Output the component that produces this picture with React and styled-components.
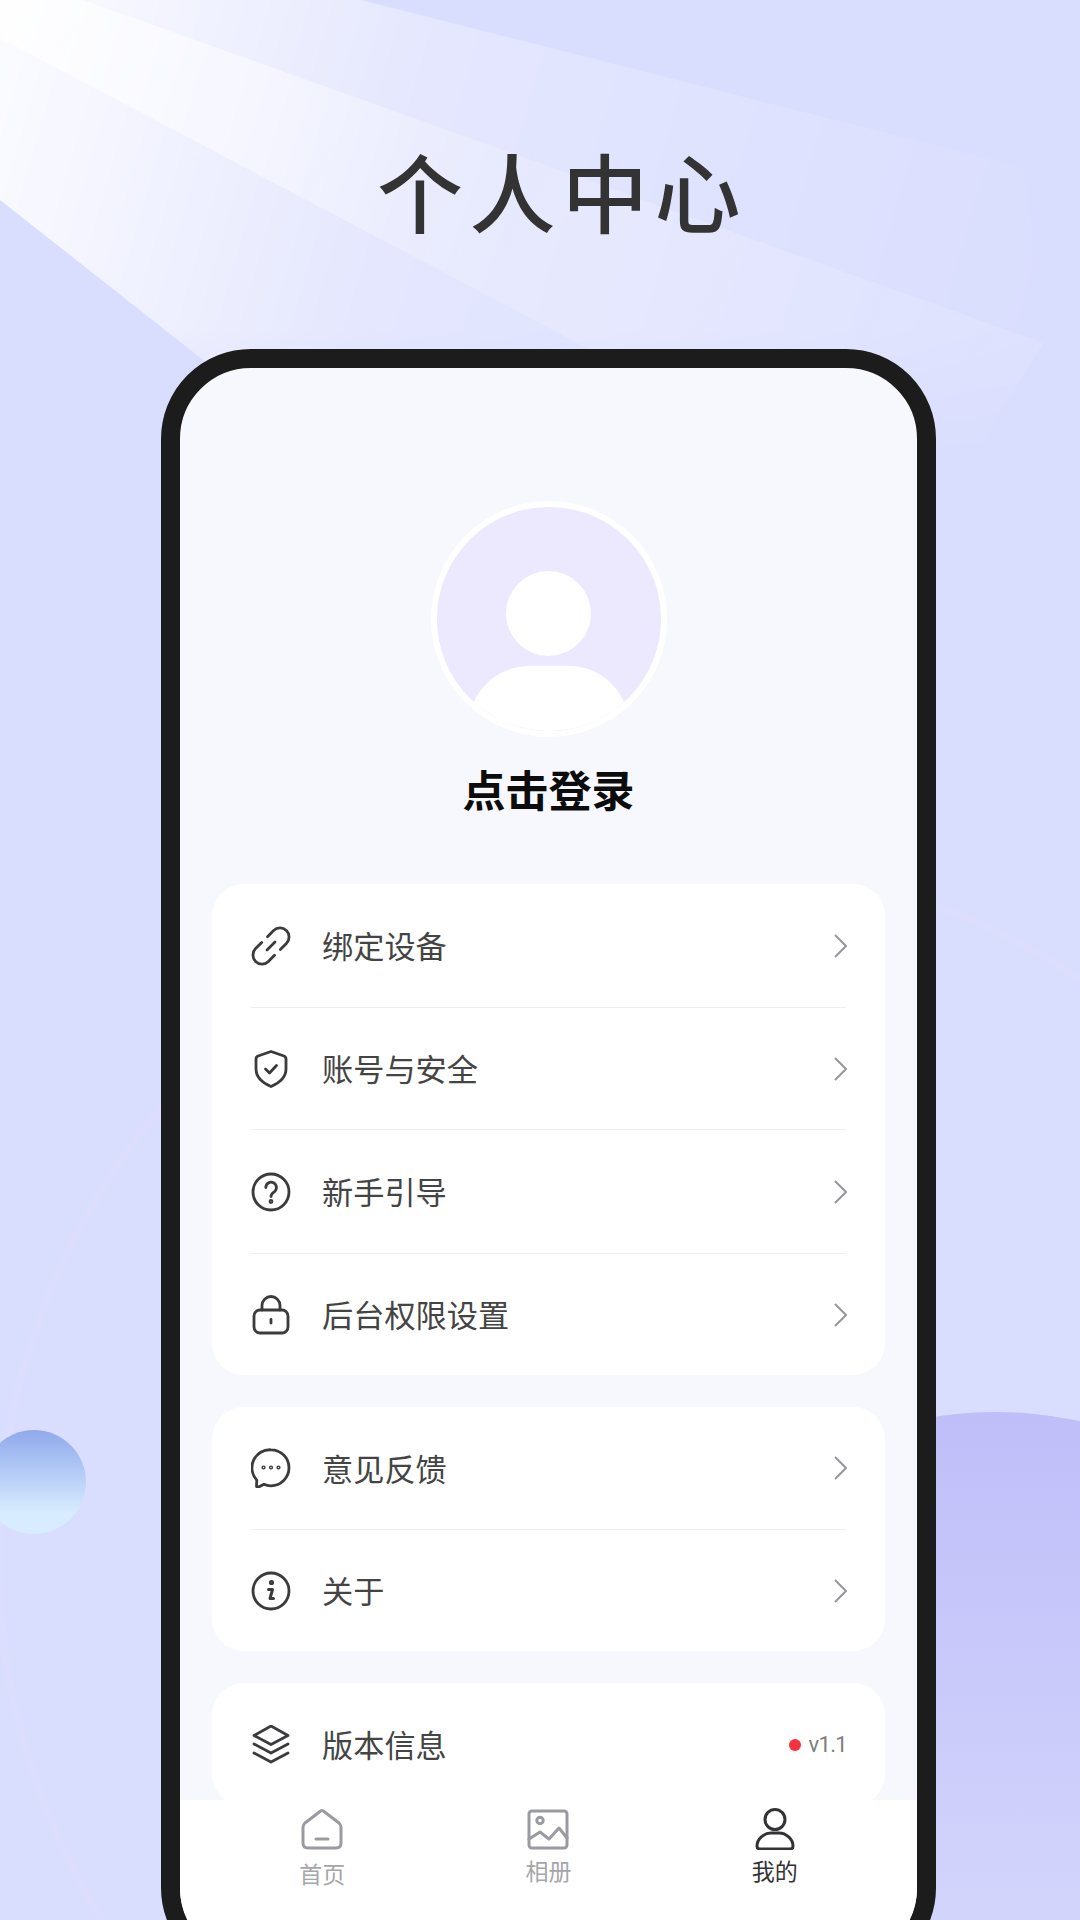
import styled, { createGlobalStyle } from "styled-components";

const GlobalStyle = createGlobalStyle`
  html, body {
    margin: 0;
    padding: 0;
  }
  body {
    font-family: "Noto Sans CJK SC", "Noto Sans", sans-serif;
  }
`;

const Page = styled.div`
  position: relative;
  width: 1080px;
  height: 1920px;
  overflow: hidden;
  background: #dadefe;
`;

const Backdrop = styled.svg`
  position: absolute;
  top: 0;
  left: 0;
`;

const Main = styled.div`
  position: relative;
  display: flex;
  flex-direction: column;
  padding: 140px 0 0 161px;
`;

const Title = styled.h1`
  margin: 0 0 109px 216px;
  font-size: 86px;
  line-height: 100px;
  font-weight: 500;
  letter-spacing: 6.5px;
  color: #333;
  white-space: nowrap;
`;

const Phone = styled.div`
  position: relative;
  box-sizing: border-box;
  width: 775px;
  height: 1629px;
  border: 19px solid #1c1c1c;
  border-radius: 90px;
  background: #f7f8fd;
  overflow: hidden;
`;

const Screen = styled.div`
  display: flex;
  flex-direction: column;
  align-items: center;
  padding-top: 133px;
`;

const Avatar = styled.div`
  position: relative;
  box-sizing: border-box;
  width: 236px;
  height: 236px;
  border: 6px solid #fff;
  border-radius: 50%;
  background: #ece8fd;
  overflow: hidden;
`;

const AvatarHead = styled.div`
  position: absolute;
  top: 64px;
  left: 69px;
  width: 85px;
  height: 85px;
  border-radius: 50%;
  background: #fff;
`;

const AvatarBody = styled.div`
  position: absolute;
  top: 159px;
  left: 32px;
  width: 160px;
  height: 90px;
  border-radius: 60px 60px 0 0;
  background: #fff;
`;

const LoginName = styled.div`
  margin: 21px 0 66px;
  font-size: 43px;
  line-height: 60px;
  font-weight: 700;
  color: #0c0c0c;
`;

const Cards = styled.div`
  display: flex;
  flex-direction: column;
  gap: 32px;
  width: 673px;
`;

const Card = styled.div`
  display: grid;
  grid-template-rows: ${(p) => p.$rows};
  border-radius: 32px;
  background: #fff;
`;

const Row = styled.div`
  display: flex;
  align-items: center;
  margin: 0 39px;
  border-bottom: 1px solid #eeeef0;
  &:last-child {
    border-bottom: 0;
  }
`;

const RowIcon = styled.svg`
  flex: none;
  width: 40px;
  height: 40px;
  fill: none;
  stroke: #3b3b3d;
  stroke-width: 2.8;
  stroke-linecap: round;
  stroke-linejoin: round;
`;

const RowLabel = styled.span`
  flex: 1;
  margin-left: 31px;
  padding-bottom: 1px;
  font-size: 31.2px;
  line-height: 44px;
  color: #444;
`;

const Chevron = styled.svg`
  flex: none;
  width: 13px;
  height: 24px;
  margin-right: -1px;
  fill: none;
  stroke: #97979b;
  stroke-width: 2;
`;

const VersionDot = styled.span`
  width: 12px;
  height: 12px;
  margin-right: 8px;
  border-radius: 50%;
  background: #f5333f;
`;

const VersionText = styled.span`
  margin-right: -1px;
  font-family: Roboto, "Noto Sans", sans-serif;
  font-size: 22px;
  letter-spacing: -0.7px;
  color: #7d7d7d;
`;

const TabBar = styled.div`
  position: absolute;
  left: 0;
  right: 0;
  bottom: 0;
  top: 1432px;
  display: grid;
  grid-template-columns: repeat(3, 1fr);
  padding: 8px 29px 0;
  background: #fff;
`;

const Tab = styled.div`
  display: flex;
  flex-direction: column;
  align-items: center;
`;

const TabIcon = styled.svg`
  display: block;
  width: 42px;
  height: 42px;
  fill: none;
  stroke: ${(p) => (p.$active ? "#333336" : "#9a9aa3")};
  stroke-width: 3;
  stroke-linecap: round;
  stroke-linejoin: round;
`;

const TabLabel = styled.span`
  margin-top: ${(p) => p.$offset}px;
  font-size: 23px;
  line-height: 30px;
  color: ${(p) => (p.$active ? "#333" : "#a6a6aa")};
`;

const Arrow = () => (
  <Chevron viewBox="0 0 13 24">
    <path d="M1 1 L12 12 L1 23" />
  </Chevron>
);

const icons = {
  link: (
    <>
      <path d="M16.5 10.7 L22.6 4.6 A9 9 0 0 1 35.4 17.4 L29.3 23.5" />
      <path d="M23.5 29.3 L17.4 35.4 A9 9 0 0 1 4.6 22.6 L10.7 16.5" />
      <path d="M16 24 L24 16" />
    </>
  ),
  shield: (
    <>
      <path d="M20 2.5 L33 7 Q35 7.8 35 10 V20 C35 28 28 34 20 37.5 C12 34 5 28 5 20 V10 Q5 7.8 7 7 Z" />
      <path d="M14.5 20 L18.5 24 L25.5 16.5" />
    </>
  ),
  help: (
    <>
      <circle cx="20" cy="20" r="18" />
      <path d="M14.8 15.5 a5.3 5.3 0 1 1 8.4 4.3 c-2.2 1.5 -3.2 2.5 -3.2 4.7" />
      <circle cx="20" cy="29.5" r="1" />
    </>
  ),
  lock: (
    <>
      <rect x="3" y="15" width="34" height="23" rx="6" />
      <path d="M11 15 V10.5 a9 9 0 0 1 18 0 V15" />
      <path d="M20 24.5 V28" />
    </>
  ),
  chat: (
    <>
      <path d="M20 1.8 a18 18 0 0 1 0 36 c-2.5 0 -5 -.5 -7 -1.5 l-5.5 2.8 c-1 .5 -2 0 -2 -1 l.3 -6 A18 18 0 0 1 20 1.8 z" />
      <circle cx="12.5" cy="19.5" r=".7" />
      <circle cx="20" cy="19.5" r=".7" />
      <circle cx="27.5" cy="19.5" r=".7" />
    </>
  ),
  info: (
    <>
      <circle cx="20" cy="20" r="18" />
      <circle cx="20.5" cy="11.5" r="1.2" />
      <path d="M17.5 18.5 H21.5 L19 27.5 H22.5" strokeWidth="3" />
    </>
  ),
  layers: (
    <>
      <path d="M20 1 L37 10.5 L20 19.5 L3 10.5 Z" />
      <path d="M3 19 L20 28 L37 19" />
      <path d="M3 28 L20 37 L37 28" />
    </>
  ),
};

const groups = [
  {
    template: "124px 122px 124px 121px",
    rows: [
      { icon: "link", label: "绑定设备" },
      { icon: "shield", label: "账号与安全" },
      { icon: "help", label: "新手引导" },
      { icon: "lock", label: "后台权限设置" },
    ],
  },
  {
    template: "123px 121px",
    rows: [
      { icon: "chat", label: "意见反馈" },
      { icon: "info", label: "关于" },
    ],
  },
  {
    template: "123px",
    rows: [{ icon: "layers", label: "版本信息", version: "v1.1" }],
  },
];

const App = () => {
  return (
    <Page>
      <GlobalStyle />
      <Backdrop width="1080" height="1920" viewBox="0 0 1080 1920">
        <defs>
          <linearGradient id="rayOuter" gradientUnits="userSpaceOnUse" x1="0" y1="0" x2="1040" y2="300">
            <stop offset="0" stopColor="#fff" stopOpacity="0.9" />
            <stop offset="0.4" stopColor="#fff" stopOpacity="0.28" />
            <stop offset="0.85" stopColor="#fff" stopOpacity="0.08" />
            <stop offset="1" stopColor="#fff" stopOpacity="0.02" />
          </linearGradient>
          <linearGradient id="rayInner" gradientUnits="userSpaceOnUse" x1="0" y1="0" x2="1100" y2="400">
            <stop offset="0" stopColor="#fff" stopOpacity="0.7" />
            <stop offset="0.45" stopColor="#fff" stopOpacity="0.18" />
            <stop offset="1" stopColor="#fff" stopOpacity="0.1" />
          </linearGradient>
          <linearGradient id="rayFade" gradientUnits="userSpaceOnUse" x1="0" y1="330" x2="0" y2="470">
            <stop offset="0" stopColor="#fff" />
            <stop offset="1" stopColor="#000" />
          </linearGradient>
          <mask id="rayMask" maskUnits="userSpaceOnUse" x="0" y="0" width="1080" height="500">
            <rect width="1080" height="500" fill="url(#rayFade)" />
          </mask>
          <linearGradient id="planet" x1="0" y1="0" x2="0" y2="1">
            <stop offset="0" stopColor="#bfbef9" />
            <stop offset="0.65" stopColor="#d4d5fc" />
          </linearGradient>
          <linearGradient id="ball" x1="0" y1="0" x2="0" y2="1">
            <stop offset="0" stopColor="#8fa9ec" />
            <stop offset="0.8" stopColor="#d8ecff" />
          </linearGradient>
        </defs>
        <g mask="url(#rayMask)">
          <polygon points="0,0 361,0 1025,168 1043,343 965,470 207,363 0,200" fill="url(#rayOuter)" />
          <polygon points="0,0 83,0 1043,343 965,470 585,347 0,38" fill="url(#rayInner)" />
        </g>
        <circle cx="692" cy="1555" r="694" fill="none" stroke="#dddefd" strokeWidth="7" />
        <circle cx="995" cy="1812" r="400" fill="url(#planet)" />
        <circle cx="34" cy="1482" r="52" fill="url(#ball)" />
      </Backdrop>
      <Main>
        <Title>个人中心</Title>
        <Phone>
          <Screen>
            <Avatar>
              <AvatarHead />
              <AvatarBody />
            </Avatar>
            <LoginName>点击登录</LoginName>
            <Cards>
              {groups.map((group) => (
                <Card key={group.rows[0].icon} $rows={group.template}>
                  {group.rows.map((row) => (
                    <Row key={row.icon}>
                      <RowIcon viewBox="0 0 40 40">{icons[row.icon]}</RowIcon>
                      <RowLabel>{row.label}</RowLabel>
                      {row.version ? (
                        <>
                          <VersionDot />
                          <VersionText>{row.version}</VersionText>
                        </>
                      ) : (
                        <Arrow />
                      )}
                    </Row>
                  ))}
                </Card>
              ))}
            </Cards>
          </Screen>
          <TabBar>
            <Tab>
              <TabIcon viewBox="0 0 42 42">
                <path d="M19 3.5 Q21 1.5 23 3.5 L38 15 Q40 17 40 19 V35 Q40 40 35 40 H7 Q2 40 2 35 V19 Q2 17 4 15 Z" />
                <path d="M15 31 H27" />
              </TabIcon>
              <TabLabel $offset={8}>首页</TabLabel>
            </Tab>
            <Tab>
              <TabIcon viewBox="0 0 42 42">
                <rect x="2" y="3" width="38" height="37" rx="3" />
                <circle cx="13" cy="12.5" r="3.2" />
                <path d="M2 31 L13 24 L22 31 L32 20 L40 30" />
              </TabIcon>
              <TabLabel $offset={5}>相册</TabLabel>
            </Tab>
            <Tab>
              <TabIcon $active viewBox="0 0 42 42">
                <circle cx="21" cy="11.5" r="10" />
                <path d="M21 25 h-4 c-7 0 -14 6 -14 13 c0 2 1 3 3 3 h30 c2 0 3 -1 3 -3 c0 -7 -7 -13 -14 -13 z" />
              </TabIcon>
              <TabLabel $active $offset={5}>我的</TabLabel>
            </Tab>
          </TabBar>
        </Phone>
      </Main>
    </Page>
  );
};

export default App;
